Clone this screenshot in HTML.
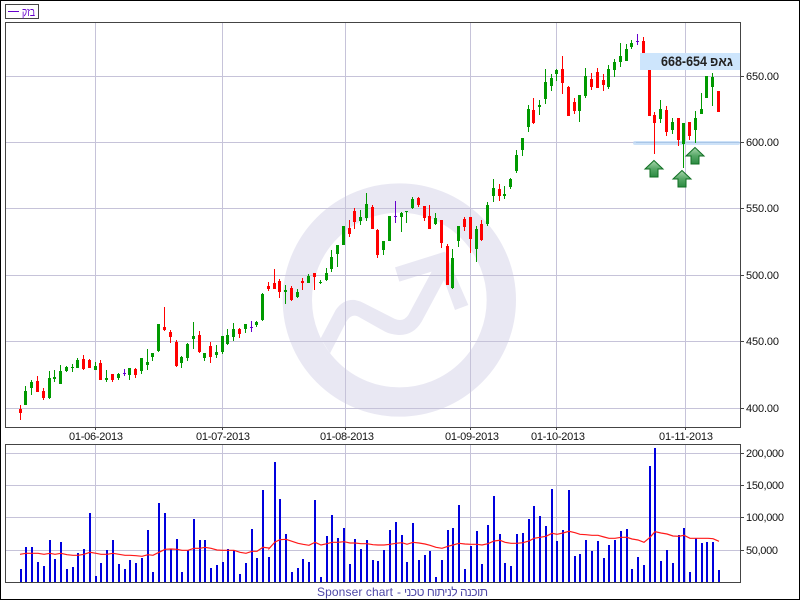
<!DOCTYPE html>
<html>
<head>
<meta charset="utf-8">
<title>Chart</title>
<style>
html,body{margin:0;padding:0;background:#fff}
svg{display:block;font-family:"Liberation Sans",Arial,sans-serif}
.l{font-size:11px;fill:#111}
</style>
</head>
<body>
<svg id="s" xmlns="http://www.w3.org/2000/svg" width="800" height="600" viewBox="0 0 800 600">
<defs>
<linearGradient id="ag" x1="0" y1="0" x2="0" y2="1">
<stop offset="0" stop-color="#a9d6ad"/>
<stop offset=".5" stop-color="#58a868"/>
<stop offset="1" stop-color="#2c8a42"/>
</linearGradient>
</defs>
<rect x="0.5" y="0.5" width="799" height="599" fill="#fff" stroke="#000"/>

<!-- legend -->
<rect x="5.5" y="4.5" width="33" height="14" fill="#fff" stroke="#444" shape-rendering="crispEdges"/>
<rect x="8" y="11" width="11" height="1" fill="#6600cc"/>
<text x="22" y="16" font-size="12" fill="#6600cc" textLength="13" lengthAdjust="spacingAndGlyphs">בזק</text>

<!-- price panel -->
<rect x="5.5" y="22.5" width="735" height="405" fill="#fff"/>
<g transform="translate(275 175) scale(.33333)" fill="#e9e8f3">
<circle cx="373" cy="375" r="306" fill="none" stroke="#e9e8f3" stroke-width="88"/>
<path d="M137 490 L182 405 Q205 372 240 375 Q255 378 268 385 L360 432 Q385 442 400 420 L470 290 L373 320 L360 277 L510 230 L580 390 L540 405 L507 315 L440 440 Q415 482 370 480 Q345 478 330 470 L255 428 Q232 412 215 438 L165 535 Z"/>
</g>
<g stroke="#c6c3d9" shape-rendering="crispEdges">
<path d="M6 76.5H740M6 142.5H740M6 208.5H740M6 275.5H740M6 341.5H740M6 408.5H740"/>
<path d="M95.5 23V427M222.5 23V427M345.5 23V427M470.5 23V427M556.5 23V427M685.5 23V427"/>
</g>
<rect x="633" y="141" width="107" height="4" rx="2" fill="#bcd8f6" opacity=".75"/>
<rect x="636" y="142" width="104" height="1" fill="#a9c5e6"/>
<g id="candles" shape-rendering="crispEdges"></g>
<rect x="640" y="53" width="100" height="17" fill="#cde5fc"/>
<text x="661" y="66" font-size="14" font-weight="bold" fill="#222" textLength="46" lengthAdjust="spacingAndGlyphs">668-654</text>
<text x="710" y="66" font-size="13" font-weight="bold" fill="#222" textLength="23" lengthAdjust="spacingAndGlyphs">גאפ</text>

<g stroke="#0f6f22" fill="url(#ag)">
<path transform="translate(654 160.5)" d="M0 0 L9 8.5 H4 V16.5 H-4 V8.5 H-9 Z"/>
<path transform="translate(682 170.5)" d="M0 0 L9 8.5 H4 V16.5 H-4 V8.5 H-9 Z"/>
<path transform="translate(695 147.5)" d="M0 0 L9 8.5 H4 V16.5 H-4 V8.5 H-9 Z"/>
</g>

<rect x="5.5" y="22.5" width="735" height="405" fill="none" stroke="#444" shape-rendering="crispEdges"/>
<g stroke="#444" shape-rendering="crispEdges">
<path d="M741 76.5H744M741 142.5H744M741 208.5H744M741 275.5H744M741 341.5H744M741 408.5H744"/>
<path d="M95.5 428V430M222.5 428V430M345.5 428V430M470.5 428V430M556.5 428V430M685.5 428V430"/>
<path d="M741 453.5H744M741 485.5H744M741 517.5H744M741 550.5H744"/>
</g>
<g class="l">
<text class="l" x="746" y="80" textLength="33">650.00</text>
<text class="l" x="746" y="146" textLength="33">600.00</text>
<text class="l" x="746" y="212" textLength="33">550.00</text>
<text class="l" x="746" y="279" textLength="33">500.00</text>
<text class="l" x="746" y="345" textLength="33">450.00</text>
<text class="l" x="746" y="412" textLength="33">400.00</text>
<text class="l" x="69" y="440" textLength="54">01-06-2013</text>
<text class="l" x="196" y="440" textLength="54">01-07-2013</text>
<text class="l" x="320" y="440" textLength="54">01-08-2013</text>
<text class="l" x="445" y="440" textLength="54">01-09-2013</text>
<text class="l" x="531" y="440" textLength="54">01-10-2013</text>
<text class="l" x="659" y="440" textLength="54">01-11-2013</text>
<text class="l" x="746" y="457" textLength="38">200,000</text>
<text class="l" x="746" y="489" textLength="38">150,000</text>
<text class="l" x="746" y="521" textLength="38">100,000</text>
<text class="l" x="746" y="554" textLength="32">50,000</text>
</g>

<!-- volume panel -->
<g stroke="#c6c3d9" shape-rendering="crispEdges">
<path d="M6 453.5H740M6 485.5H740M6 517.5H740M6 550.5H740"/>
<path d="M95.5 445V582M222.5 445V582M345.5 445V582M470.5 445V582M556.5 445V582M685.5 445V582"/>
</g>
<g id="bars" fill="#0000dd" shape-rendering="crispEdges"></g>
<polyline id="ma" fill="none" stroke="#ff1a1a" stroke-width="1.2"/>
<rect x="5.5" y="444.5" width="735" height="138" fill="none" stroke="#444" shape-rendering="crispEdges"/>
<g font-size="12" fill="#4f48a8">
<text x="317" y="596" textLength="76">Sponser chart</text>
<text x="397" y="596">-</text>
<text x="404" y="596" textLength="84">תוכנה לניתוח טכני</text>
</g>
</svg>
<script>
(function(){
var C={g:'#009900',r:'#ff0000',p:'#6600cc'};
var groups=[
[0,270,"61,405,450,417,429,r 76,348,405,363,405,g 94,330,375,336,354,g 112,318,366,333,366,r 130,354,390,363,384,r 148,303,387,324,384,g 163,300,336,321,327,g 181,285,342,303,342,g 199,288,306,291,303,g 217,282,306,291,294,g 232,264,294,270,294,g 250,255,300,267,297,r 268,267,294,270,294,r 286,276,300,288,300,g 301,270,330,279,330,r 319,300,336,324,330,g 337,312,336,312,330,r 355,309,330,312,324,g 373,297,318,309,312,p 388,294,330,294,315,g 406,294,324,297,315,r 424,264,312,264,303,g 442,237,300,276,285,g 457,249,273,249,261,g 475,162,246,162,243,g 493,111,183,171,180,r 511,181,219,186,201,r 529,210,291,216,288,r 544,258,294,261,279,g 562,219,273,222,264,g 580,156,237,198,207,g 598,183,249,195,246,r 613,249,273,249,264,g 631,216,279,228,261,r 649,225,264,246,255,g 667,198,252,198,246,g 682,177,225,195,222,g 700,159,213,177,201,g 718,174,204,177,192,r 736,162,189,162,177,g 754,153,186,171,174,p 769,153,171,156,165,g 787,69,153,72,150,g 805,36,63,48,57,r"],
[260,170,"43,297,357,339,357,r 58,327,384,333,366,r 76,345,402,360,366,g 94,348,393,354,390,r 112,357,384,366,381,g 127,324,360,333,339,r 145,312,339,318,339,g 163,309,360,309,321,r 181,330,342,336,339,g 199,294,333,309,330,g 214,240,306,261,297,g 232,225,291,225,252,g 250,168,225,168,225,g 268,150,201,174,192,r 283,114,177,123,156,r 301,120,165,141,153,g 319,69,153,102,144,g 337,105,177,111,177,r 352,177,264,180,255,r 370,213,255,213,240,g 388,138,213,138,213,g 406,93,159,138,141,p 424,126,186,129,141,g 439,123,159,123,126,g 457,81,117,87,114,g 475,81,111,84,105,r 493,108,153,108,144,r 508,105,177,138,177,r 526,129,165,144,162,g 544,150,234,150,219,r 562,222,345,228,345,r 577,237,357,264,354,g 595,168,231,168,213,g 613,141,183,147,171,r 631,141,249,141,207,r 649,168,276,177,237,g 664,150,213,162,210,r 682,96,168,105,162,g 700,27,96,54,78,g 718,42,93,57,78,r 733,48,87,72,78,g 751,24,57,27,51,g"],
[440,40,"229,330,399,345,393,g 247,294,348,294,330,g 265,195,276,207,261,g 280,174,252,210,249,r 298,180,225,195,201,g 316,87,192,126,177,g 334,102,153,114,138,g 349,87,123,90,102,g 367,48,162,87,129,r 385,138,228,141,228,r 403,174,222,186,213,r 418,165,246,165,213,g 436,84,174,108,168,g 454,99,150,117,141,r 472,84,144,96,144,r"],
[600,20,"10,162,213,180,195,r 25,135,207,147,201,g 43,117,171,126,150,g 61,69,141,108,126,g 79,72,123,87,123,g 94,60,87,69,81,g 112,42,75,63,66,p 130,51,130,63,130,r 148,130,288,130,288,r 163,276,402,285,309,r 181,240,309,267,297,g 199,258,348,270,336,r 217,294,342,306,330,g 235,294,378,294,360,r 250,309,444,309,372,g 268,306,360,306,348,r 286,273,369,294,330,g 304,219,282,267,282,g 319,168,234,168,234,g 337,159,258,171,201,g 355,213,276,213,276,r"]
];
var NS='http://www.w3.org/2000/svg',X=[];
var cg=document.getElementById('candles');
function R(p,x,y,w,h,f){var r=document.createElementNS(NS,'rect');r.setAttribute('x',x);r.setAttribute('y',y);r.setAttribute('width',w);r.setAttribute('height',h);if(f)r.setAttribute('fill',f);p.appendChild(r);}
groups.forEach(function(g){
 g[2].split(' ').forEach(function(s){
  var a=s.split(','),x=Math.floor(g[0]+(+a[0])/3),f=C[a[5]];
  var y=function(v){return Math.round(g[1]+(+v)/3);};
  X.push(x);
  R(cg,x,y(a[1]),1,y(a[2])-y(a[1]),f);
  R(cg,x-1,y(a[3]),3,Math.max(1,y(a[4])-y(a[3])),f);
 });
});
var tops=[387,321,321,366,378,300,357,306,387,381,339,327,219,408,369,330,300,372,387,360,369,354,270,396,189,219,327,297,396,330,237,300,300,384,375,366,327,330,402,369,267,354,150,351,
66,177,282,396,384,357,366,180,411,288,225,294,264,372,297,327,300,360,363,330,270,246,285,366,249,360,345,333,411,360,270,264,195,387,318,273,372,255,168,282,369,378,282,279,237,198,
228,258,147,303,270,150,348,342,300,333,303,354,315,300,273,267,387,351,375,78,24,363,330,369,285,264,396,294,309,306,306,390];
var bg=document.getElementById('bars');
tops.forEach(function(t,i){var y=Math.round(440+t/3);if(X[i]!==undefined)R(bg,X[i],y,2,582-y);});
var ma=[[0,"60,343 78,340 96,340 114,340 132,343 150,340 165,343 183,340 201,344 219,346 234,346 252,343 270,337 288,340 303,343 321,343 339,340 357,343 375,346 390,346 408,347 426,349 444,344 459,346 477,337 495,328 513,327 531,328 546,331 564,331 582,325 600,325 615,322 633,325 651,330 669,331 684,331 702,331 720,337 738,340 756,334 771,334 789,322 807,324"],
[265,"12,326 30,306 45,299 63,298 81,304 99,310 114,313 132,316 150,307 168,315 186,311 201,307 219,307 237,305 255,309 270,309 288,311 306,311 324,314 339,315 357,315 375,313 393,310 411,308 426,313 444,307 462,309 480,312 495,316 513,322 531,325 549,319 564,315 582,310 600,312 618,313 636,313 651,315 669,311 687,303 705,301 720,307 738,310 756,310 774,308 792,303"],
[530,"12,295 30,292 48,289 66,280 81,283 99,279 117,274 135,278 150,283 168,284 186,286 204,286 222,291 237,295 255,295 273,292 291,292 306,297 324,300 342,307 360,292 375,275 393,279 411,282 429,288 447,289 462,286 480,295 498,295 516,295 534,295 549,296 567,304"]];
var pts=[];
ma.forEach(function(m){m[1].split(' ').forEach(function(p){var a=p.split(',');pts.push((m[0]+a[0]/3).toFixed(1)+','+(440+a[1]/3).toFixed(1));});});
document.getElementById('ma').setAttribute('points',pts.join(' '));
})();
</script>
</body>
</html>
